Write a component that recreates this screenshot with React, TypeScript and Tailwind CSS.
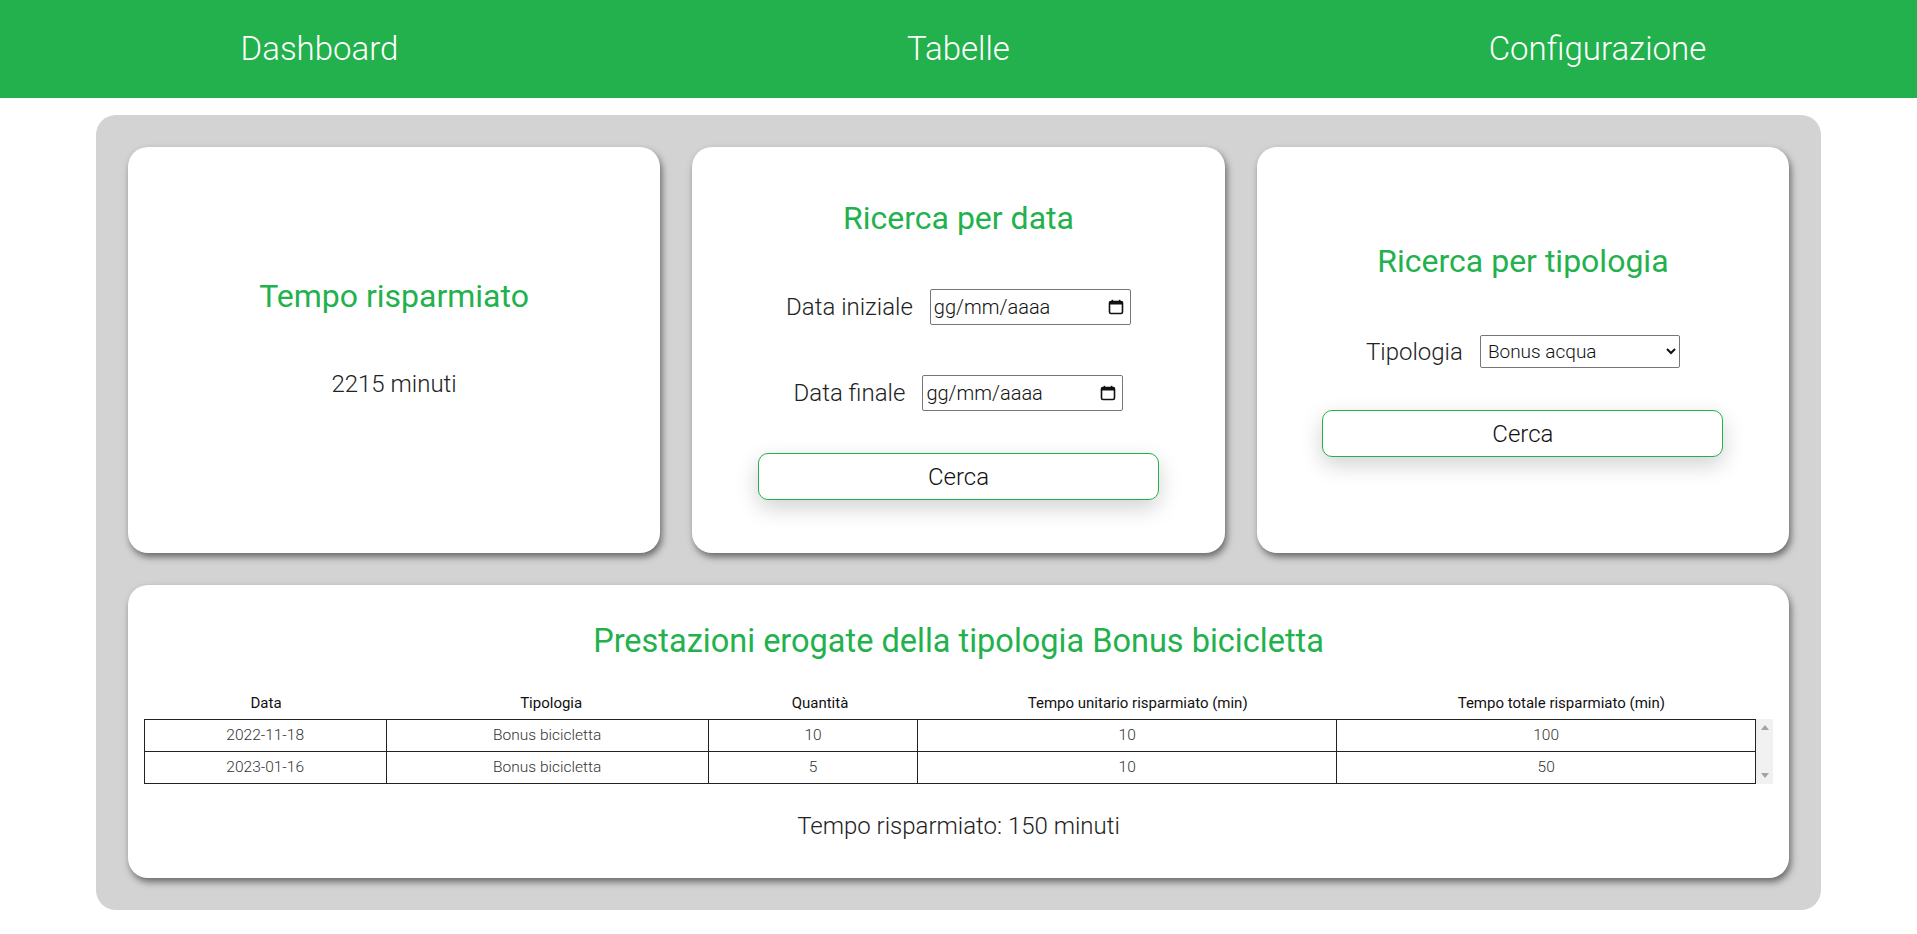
import React from 'react';

const rows = [
  { id: '1', data: '2022-11-18', tipologia: 'Bonus bicicletta', quantita: 10, unitario: 10, totale: 100 },
  { id: '2', data: '2023-01-16', tipologia: 'Bonus bicicletta', quantita: 5, unitario: 10, totale: 50 },
];

const colWidths = ['w-[15%]', 'w-[20%]', 'w-[13%]', 'w-[26%]', 'w-[26%]'];

function Cols() {
  return (
    <colgroup>
      {colWidths.map((w, i) => (
        <col key={i} className={w} />
      ))}
    </colgroup>
  );
}

function CalendarIcon() {
  return (
    <svg width="16" height="16" viewBox="0 0 16 16" fill="none">
      <rect x="1.5" y="2.5" width="13" height="12" rx="1.5" stroke="#111" strokeWidth="1.6" />
      <rect x="1.5" y="2.5" width="13" height="3" fill="#111" />
      <rect x="3.6" y="0.8" width="1.6" height="2.5" fill="#111" />
      <rect x="10.8" y="0.8" width="1.6" height="2.5" fill="#111" />
    </svg>
  );
}

// the table body scrolls in the original page; the bar is drawn by hand here
function ScrollTrack() {
  return (
    <div className="flex w-[17px] shrink-0 flex-col items-center justify-between bg-[#f1f1f1] py-[6px]">
      <svg width="8" height="5" viewBox="0 0 8 5">
        <path d="M0 5 L4 0 L8 5 Z" fill="#a3a3a3" />
      </svg>
      <svg width="8" height="5" viewBox="0 0 8 5">
        <path d="M0 0 L8 0 L4 5 Z" fill="#a3a3a3" />
      </svg>
    </div>
  );
}

function DateField({ label }: { label: string }) {
  return (
    <div className="flex items-center justify-center gap-[17px]">
      <span className="text-2xl font-light text-[#222]">{label}</span>
      <div className="flex h-9 w-[201px] items-center justify-between rounded-[2px] border border-[#767676] bg-white pl-[3px] pr-[6px]">
        <span className="text-xl font-light text-[#111]">gg/mm/aaaa</span>
        <CalendarIcon />
      </div>
    </div>
  );
}

function CercaButton() {
  return (
    <button className="mx-auto h-[47px] w-[401px] rounded-[10px] border border-[#22b14c] bg-white text-2xl font-light text-[#111] shadow-[0_8px_22px_rgba(0,0,0,0.18)]">
      Cerca
    </button>
  );
}

function Card({ children, className = '' }: { children: React.ReactNode; className?: string }) {
  return (
    <div className={`rounded-[20px] bg-white shadow-[2px_4px_7px_rgba(0,0,0,0.5)] ${className}`}>
      {children}
    </div>
  );
}

export default function App() {
  return (
    <div className="min-h-screen bg-white font-['Roboto',sans-serif]">
      <nav className="grid h-[98px] grid-cols-3 items-center bg-[#22b14c] text-center text-[33px] font-light text-white">
        <span>Dashboard</span>
        <span>Tabelle</span>
        <span>Configurazione</span>
      </nav>

      <main className="mx-auto mt-[17px] flex w-[90%] flex-col gap-8 rounded-[20px] bg-[#d3d3d3] p-8">
        <div className="grid grid-cols-3 gap-8">
          <Card className="flex h-[406px] flex-col items-center justify-center">
            <h2 className="text-[32px] leading-[37px] text-[#22b14c]">Tempo risparmiato</h2>
            <p className="mt-[55px] mb-6 text-2xl leading-7 font-light text-[#222]">2215 minuti</p>
          </Card>

          <Card className="flex h-[406px] flex-col justify-center">
            <h2 className="text-center text-[32px] leading-[37px] text-[#22b14c]">Ricerca per data</h2>
            <div className="mt-[52px] flex flex-col gap-[50px]">
              <DateField label="Data iniziale" />
              <DateField label="Data finale" />
            </div>
            <div className="mt-[42px] flex">
              <CercaButton />
            </div>
          </Card>

          <Card className="flex h-[406px] flex-col justify-center">
            <h2 className="text-center text-[32px] leading-[37px] text-[#22b14c]">Ricerca per tipologia</h2>
            <div className="mt-[55px] flex items-center justify-center gap-[17px]">
              <span className="text-2xl font-light text-[#222]">Tipologia</span>
              <select className="h-[33px] w-[200px] rounded-[2px] border border-[#767676] bg-white pl-[3px] text-[19px] font-light text-[#111]" defaultValue="acqua">
                <option value="acqua">Bonus acqua</option>
                <option value="bicicletta">Bonus bicicletta</option>
              </select>
            </div>
            <div className="mt-[42px] flex">
              <CercaButton />
            </div>
          </Card>
        </div>

        <Card className="px-4 pt-[38px] pb-[38px]">
          <h2 className="text-center text-[32.5px] leading-[37px] text-[#22b14c]">
            Prestazioni erogate della tipologia Bonus bicicletta
          </h2>

          <div className="mt-[28px]">
            <table className="w-full table-fixed border-collapse">
              <Cols />
              <thead>
                <tr className="h-[31px] text-[15px] text-[#111]">
                  <th className="font-normal">Data</th>
                  <th className="font-normal">Tipologia</th>
                  <th className="font-normal">Quantità</th>
                  <th className="font-normal">Tempo unitario risparmiato (min)</th>
                  <th className="font-normal">Tempo totale risparmiato (min)</th>
                </tr>
              </thead>
            </table>
            <div className="flex">
              <table className="flex-1 table-fixed border-collapse">
                <Cols />
                <tbody>
                  {rows.map((r) => (
                    <tr key={r.id} className="h-8 text-center text-[15.5px] font-light text-[#333]">
                      <td className="border border-[#222]">{r.data}</td>
                      <td className="border border-[#222]">{r.tipologia}</td>
                      <td className="border border-[#222]">{r.quantita}</td>
                      <td className="border border-[#222]">{r.unitario}</td>
                      <td className="border border-[#222]">{r.totale}</td>
                    </tr>
                  ))}
                </tbody>
              </table>
              <ScrollTrack />
            </div>
          </div>

          <p className="mt-[28px] text-center text-2xl leading-7 font-light text-[#222]">
            Tempo risparmiato: 150 minuti
          </p>
        </Card>
      </main>
    </div>
  );
}
